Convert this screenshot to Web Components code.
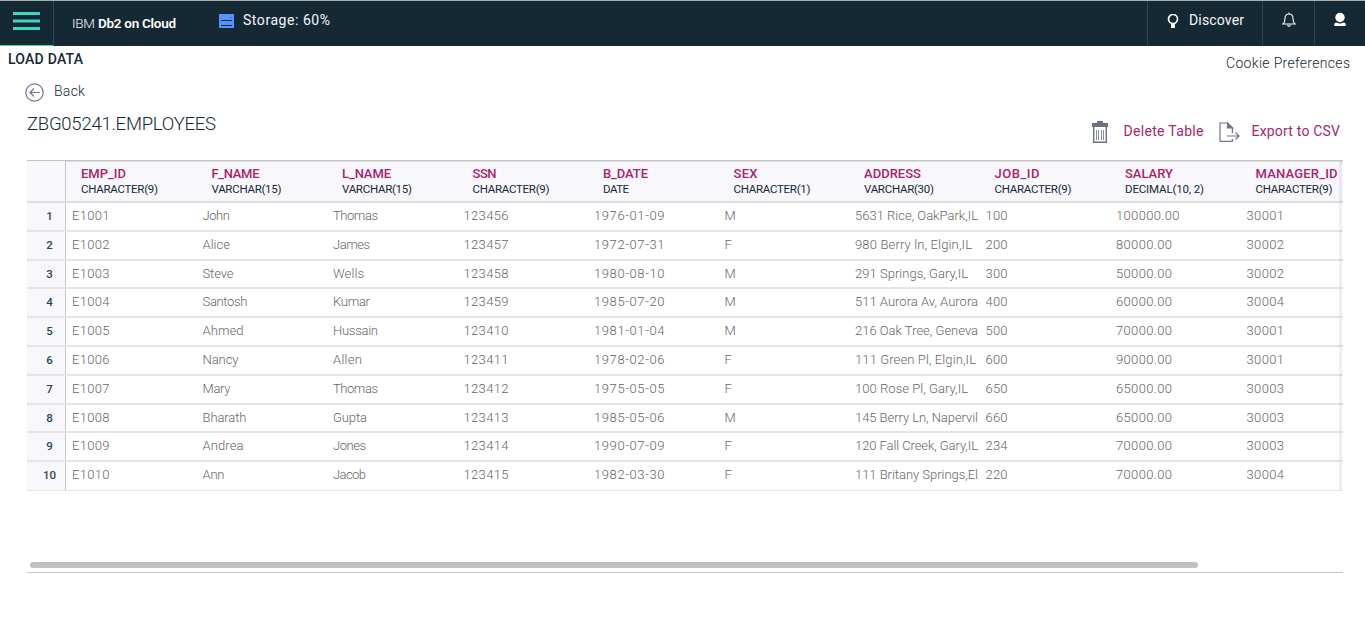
<!DOCTYPE html>
<html lang="en">
<head>
<meta charset="utf-8">
<title>Db2 on Cloud - Load Data</title>
<style>
html,body{margin:0;height:100%;background:#fff;overflow:hidden;font-family:Roboto,"Liberation Sans",sans-serif}
</style>
</head>
<body>
<db-console></db-console>
<script>
const define = (name, markup, setup) => {
  const template = document.createElement('template');
  template.innerHTML = markup;
  customElements.define(name, class extends HTMLElement {
    connectedCallback() {
      if (this.shadowRoot) return;
      this.attachShadow({mode: 'open'}).append(template.content.cloneNode(true));
      if (setup) setup(this, this.shadowRoot);
    }
  });
};

/* A single line of text whose tracking is adjusted to occupy w pixels. */
define('ui-label', `<style>
:host{display:block;white-space:nowrap;flex:none}
span{display:inline-block}
</style><span><slot></slot></span>`, (host, root) => {
  const w = parseFloat(host.getAttribute('w'));
  const n = host.textContent.length;
  if (!w || !n) return;
  const span = root.querySelector('span');
  const natural = span.getBoundingClientRect().width;
  host.style.letterSpacing = n > 1 ? ((w - natural) / (n - 1)).toFixed(3) + 'px' : '0';
  host.style.width = w + 'px';
});

define('top-bar', `<style>
:host{display:flex;height:46px;box-sizing:border-box;border-top:1px solid #a9aeb1;background:#152935;color:#f4f7fb}
.menu{width:53px;box-sizing:border-box;border-bottom:1px solid #41d6c3;padding:11px 0 0 13px}
.brand{border-left:1px solid #2b4b62;padding:13px 0 0 18px;display:flex;font-size:13.5px;line-height:18px;height:32px}
.brand ui-label:first-child{font-weight:300}
.brand ui-label+ui-label{margin-left:3px;font-weight:600;color:#fff}
.storage{margin-left:43px;display:flex;font-size:14px;line-height:18px;padding-top:10px}
.storage svg{margin:3px 9px 0 0}
.right{margin-left:auto;display:flex}
.cell{box-sizing:border-box;border-left:1px solid #24485e;display:flex;padding-top:10px;font-size:14px;line-height:18px}
svg{display:block;flex:none}
</style>
<div class="menu"><svg width="27" height="18"><path d="M0 1.5h27M0 9h27M0 16.5h27" stroke="#41d6c3" stroke-width="3"/></svg></div>
<div class="brand"><ui-label w="23">IBM</ui-label><ui-label w="78">Db2 on Cloud</ui-label></div>
<div class="storage"><svg width="15" height="14"><path d="M0 0h15v14H0z" fill="#5392ff"/><path d="M2 6.500h11M2 11.500h11" stroke="#152935" stroke-width="1.200"/><path d="M11 3.500h1.500" stroke="#2f5f9f"/></svg><ui-label w="87">Storage: 60%</ui-label></div>
<div class="right">
<div class="cell" style="width:115px;padding-left:19px"><svg width="12" height="15" style="margin:3px 10px 0 0"><circle cx="6" cy="5" r="4.500" fill="none" stroke="#fff" stroke-width="1.700"/><path d="M4 9.500h4V14H4z" fill="#fff"/></svg><ui-label w="55">Discover</ui-label></div>
<div class="cell" style="width:52px;padding-left:18.500px"><svg width="14" height="16" style="margin-top:1px" fill="none" stroke="#fff" stroke-width="1.1"><path d="M1 12h12c-1.600-1.200-2-2-2-5.400C11 3.500 9.500 2 7 2S3 3.500 3 6.600C3 10 2.600 10.800 1 12zM7 2V.5M5.500 13Q7 15.500 8.500 13"/></svg></div>
<div class="cell" style="width:51px;padding-left:19px"><svg width="12" height="15" style="margin-top:1px" fill="#fff"><circle cx="6" cy="5.500" r="4.700"/><path d="M.3 14v-2q.2-1.500 2-1.500Q6 12.500 9.700 10.500q1.800 0 2 1.500v2z"/></svg></div>
</div>`);

define('page-heading', `<style>
:host{display:block;height:114px;color:#152935}
.top{display:flex;justify-content:space-between;padding:0 15px 0 8px;height:36px}
.title{font-size:14px;font-weight:500;line-height:18px;padding-top:4px}
.cookie{font-size:14px;font-weight:300;line-height:18px;padding-top:8px}
.main{display:flex;justify-content:space-between;padding:0 25px}
.back{display:flex;font-size:14px;line-height:18px;font-weight:300;height:22px}
.back svg{margin:1px 10px 0 0}
.name{font-size:18.500px;font-weight:300;line-height:24px;padding:8px 0 0 2px}
.actions{display:flex;color:#a6266e;font-size:14px;line-height:18px;padding-top:40px}
svg{display:block;flex:none}
</style>
<div class="top"><ui-label class="title" w="75">LOAD DATA</ui-label><ui-label class="cookie" w="124">Cookie Preferences</ui-label></div>
<div class="main"><div><div class="back"><svg width="19" height="19" fill="none" stroke="#70768a" stroke-width="1.200"><circle cx="9.500" cy="9.500" r="8.700"/><path d="M14.500 9.500H5M9 5.500l-4 4 4 4"/></svg><ui-label w="31">Back</ui-label></div>
<ui-label class="name" w="189">ZBG05241.EMPLOYEES</ui-label></div>
<div class="actions">
<svg width="16" height="22" style="margin:-1px 15.500px 0 0" fill="#6b6f82"><path d="M5 0h6v2h5v4H0V2h5z"/><path d="M1.700 6v15.300h12.600V6" fill="none" stroke="#6b6f82" stroke-width="1.400"/><path d="M4.500 9v10M6.500 9v10M9.500 9v10M11.500 9v10" stroke="#8b8e9e"/></svg>
<ui-label w="80">Delete Table</ui-label>
<svg width="21" height="21" style="margin:0 12px 0 15px" fill="none" stroke="#70748a" stroke-width="1.200"><path d="M13.400 11V6L8.500 1H1v18.400h12.400V17"/><path d="M8.500 1v5h5z" fill="#70748a"/><path d="M8 14h12M16.500 10.500L20 14l-3.500 3.500"/></svg>
<ui-label w="88.500">Export to CSV</ui-label></div></div>`);

define('data-grid', `<style>
:host{display:block;margin:0 22px 0 27px;height:413px;box-sizing:border-box;border-bottom:1px solid #c4c4c4}
.view{overflow:hidden;position:relative;border-top:1px solid #c4c4c4;height:331px;box-sizing:border-box}
.view:after{content:"";position:absolute;right:1px;top:0;bottom:1px;width:3px;background:#00000010}
.row{display:grid;grid-template-columns:39px repeat(10,130.500px);height:28.800px;box-sizing:border-box;border-bottom:2px solid #e5e5e5;width:1344px;font-size:13px;font-weight:300;line-height:26px;color:#666}
.row:last-child{border-bottom-width:1px}
.row>div{overflow:hidden}
.head{height:42px;background:#f8f8fc;border-bottom:2px solid #dedee0;box-shadow:inset 0 1px #dddde0}
.head .cell{padding:5px 0 0 15px;line-height:15px}
.head ui-label:first-child{font-size:13px;font-weight:500;color:#aa226d}
.head ui-label:last-child{font-size:11.500px;font-weight:400;color:#152935;line-height:16px}
.num{box-sizing:border-box;border-right:1px solid #c8c8c8;background:#f8f8fc;color:#30434f;font-size:11.500px;font-weight:500;padding-left:7px;text-align:center}
.row:not(.head) .num{margin-top:0}
.row:not(.head) .cell{margin-left:6px;width:123.500px}
.spacer{height:71px}
.thumb{width:1168px;height:6px;border-radius:3px;background:#c1c1c1;margin-left:3px}
</style><div class="view"></div><div class="spacer"></div><div class="thumb"></div>`, (host, root) => {
  const view = root.querySelector('.view');
  const cell = inner => `<div class="cell">${inner}</div>`;
  const label = ([text, w]) => `<ui-label w="${w}">${text}</ui-label>`;
  const heads = [
    ['EMP_ID',45,'CHARACTER(9)',77],['F_NAME',48,'VARCHAR(15)',70],['L_NAME',49,'VARCHAR(15)',70],
    ['SSN',24,'CHARACTER(9)',77],['B_DATE',45,'DATE',26],['SEX',24,'CHARACTER(1)',77],
    ['ADDRESS',57,'VARCHAR(30)',70],['JOB_ID',45,'CHARACTER(9)',77],['SALARY',48,'DECIMAL(10, 2)',79],['MANAGER_ID',82,'CHARACTER(9)',77]
  ];
  const people = [
    ['John',27.5,'Thomas',45,'123456','1976-01-09','M','5631 Rice, OakPark,IL',123,'100','100000.00','30001'],
    ['Alice',27.5,'James',37,'123457','1972-07-31','F','980 Berry ln, Elgin,IL',117,'200','80000.00','30002'],
    ['Steve',31,'Wells',31,'123458','1980-08-10','M','291 Springs, Gary,IL',113,'300','50000.00','30002'],
    ['Santosh',45,'Kumar',37,'123459','1985-07-20','M','511 Aurora Av, Aurora',123,'400','60000.00','30004'],
    ['Ahmed',41,'Hussain',45,'123410','1981-01-04','M','216 Oak Tree, Geneva',123,'500','70000.00','30001'],
    ['Nancy',36,'Allen',29,'123411','1978-02-06','F','111 Green Pl, Elgin,IL',121,'600','90000.00','30001'],
    ['Mary',28,'Thomas',45,'123412','1975-05-05','F','100 Rose Pl, Gary,IL',113,'650','65000.00','30003'],
    ['Bharath',44,'Gupta',34,'123413','1985-05-06','M','145 Berry Ln, Napervil',123,'660','65000.00','30003'],
    ['Andrea',41,'Jones',33,'123414','1990-07-09','F','120 Fall Creek, Gary,IL',123,'234','70000.00','30003'],
    ['Ann',22,'Jacob',33,'123415','1982-03-30','F','111 Britany Springs,El',123,'220','70000.00','30004']
  ];
  view.innerHTML = '<div class="row head"><div class="num"></div>' +
    heads.map(h => cell(label([h[0],h[1]]) + label([h[2],h[3]]))).join('') + '</div>' +
    people.map((p, i) => {
      const values = [['E10' + String(i + 1).padStart(2,'0'),37.5],[p[0],p[1]],[p[2],p[3]],[p[4],45],[p[5],70.5],
        [p[6],p[6] === 'M' ? 10 : 7],[p[7],p[8]],[p[9],22],[p[10],p[10].length > 8 ? 63.5 : 56],[p[11],37.5]];
      return `<div class="row"><div class="num">${i + 1}</div>${values.map(v => cell(label(v))).join('')}</div>`;
    }).join('');
});

define('db-console', `<style>
:host{display:flex;flex-direction:column;height:626px}
top-bar,page-heading,data-grid{flex:none}
</style><top-bar></top-bar><page-heading></page-heading><data-grid></data-grid>`);
</script>
</body>
</html>
